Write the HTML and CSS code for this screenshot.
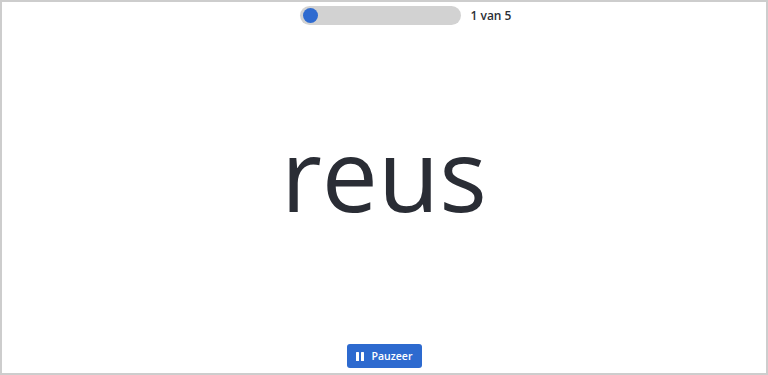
FILE: index.html
```html
<!DOCTYPE html>
<html lang="nl">
<head>
<meta charset="utf-8">
<link rel="stylesheet" href="styles.css">
</head>
<body>
<div class="frame">
  <header class="top">
    <div class="track"><span class="dot"></span></div>
    <span class="count">1 van 5</span>
  </header>
  <main class="stage">
    <div class="word">reus</div>
  </main>
  <footer class="bottom">
    <button class="pause" type="button">
      <svg class="pause-icon" width="8" height="9" viewBox="0 0 8 9"><rect x="0" y="0" width="3" height="9" rx="0.5" fill="#fff"/><rect x="5" y="0" width="3" height="9" rx="0.5" fill="#fff"/></svg>
      <span>Pauzeer</span>
    </button>
  </footer>
</div>
</body>
</html>
```
FILE: styles.css
```css
* { box-sizing: border-box; }
html, body { margin: 0; padding: 0; background: #fff; }
body { font-family: "Open Sans", "Liberation Sans", sans-serif; }
.frame {
  width: 768px;
  height: 375px;
  border: 2px solid #cdcdcd;
  display: flex;
  flex-direction: column;
}
.top {
  display: flex;
  align-items: center;
  justify-content: center;
  gap: 10px;
  padding: 4px 0 0 43px;
}
.track {
  width: 161px;
  height: 19px;
  border-radius: 10px;
  background: #d2d2d2;
  display: flex;
  align-items: center;
  padding-left: 3px;
}
.dot {
  width: 15px;
  height: 15px;
  border-radius: 50%;
  background: #2f6bd0;
}
.count {
  font-size: 12px;
  font-weight: 600;
  color: #2b2f36;
}
.stage {
  flex: 1;
  display: flex;
  align-items: center;
  justify-content: center;
}
.word {
  font-size: 100px;
  font-weight: 400;
  color: #2a2d35;
  line-height: 1;
  padding-bottom: 24px;
}
.bottom {
  display: flex;
  justify-content: center;
  padding-bottom: 5px;
}
.pause {
  width: 75px;
  height: 24px;
  border: none;
  border-radius: 3px;
  background: #2d6acf;
  color: #fff;
  font-family: "Open Sans", "Liberation Sans", sans-serif;
  font-size: 10.5px;
  font-weight: 600;
  display: flex;
  align-items: center;
  justify-content: center;
  gap: 8px;
  padding: 0;
}
.pause-icon { display: block; }
```
